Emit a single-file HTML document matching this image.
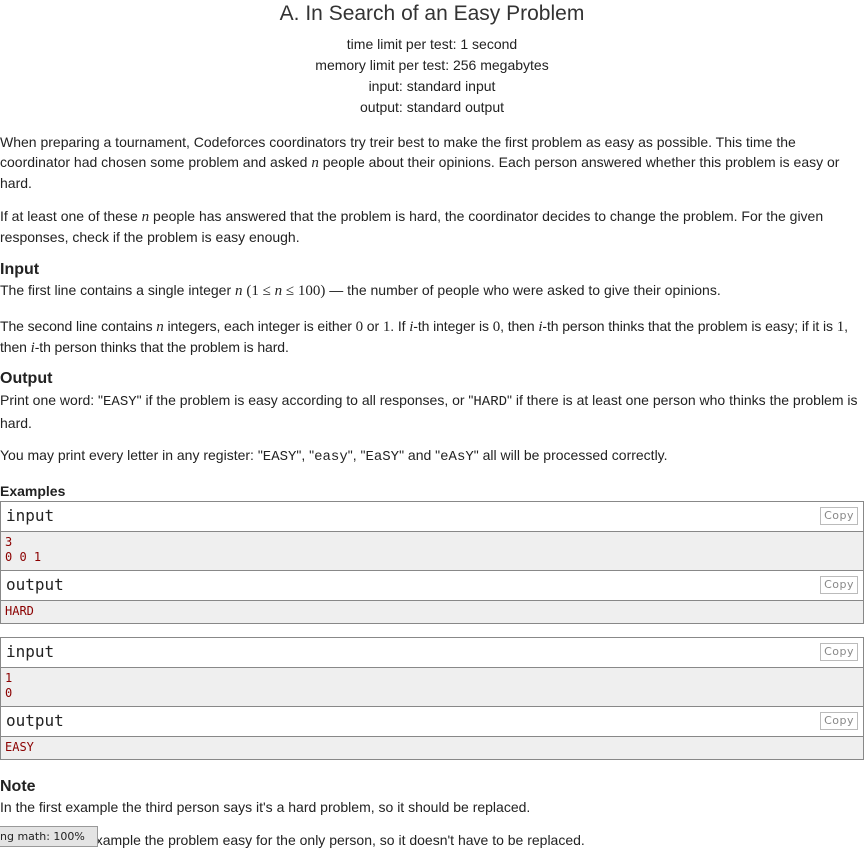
<!DOCTYPE html>
<html><head><meta charset="utf-8"><style>
body{margin:0;width:864px;height:848px;overflow:hidden;background:#fff;font-family:"Liberation Sans",sans-serif;font-size:14px;color:#222;position:relative}
.a{position:absolute;left:0;white-space:nowrap}
.c{position:absolute;left:0;width:864px;text-align:center}
.m{font-family:"Liberation Serif",serif;font-style:italic;font-size:15px}
.r{font-family:"Liberation Serif",serif;font-size:15px}
.tt{font-family:"Liberation Mono",monospace;font-size:14px}
h3{position:absolute;left:0;margin:0;font-size:16px;font-weight:bold}
.box{position:absolute;left:0;width:862px;border:1px solid #888}
.ttl{height:29px;border-bottom:1px solid #888;background:#fff;position:relative;font-family:"DejaVu Sans Mono","Liberation Mono",monospace;font-size:16px;line-height:28px;padding-left:5px}
.cp{position:absolute;right:5px;top:5px;border:1px solid #bbb;font-size:11px;color:#888;font-family:"DejaVu Sans",sans-serif;line-height:16px;padding:0 3px;letter-spacing:.5px}
.dat{background:#efefef;border-bottom:1px solid #888;font-family:"DejaVu Sans Mono","Liberation Mono",monospace;font-size:12px;color:#8b0000;padding:3px 4px;line-height:15px}
.dat:last-child{border-bottom:none}
</style></head><body>
<div class="c" style="top:2px;font-size:21px;color:#333">A. In Search of an Easy Problem</div>
<div class="c" style="top:36px">time limit per test: 1 second</div>
<div class="c" style="top:57px">memory limit per test: 256 megabytes</div>
<div class="c" style="top:78px">input: standard input</div>
<div class="c" style="top:99px">output: standard output</div>
<div class="a" style="top:132px;line-height:20px;white-space:normal;width:862px">When preparing a tournament, Codeforces coordinators try treir best to make the first problem as easy as possible. This time the coordinator had chosen some problem and asked <span class="m">n</span> people about their opinions. Each person answered whether this problem is easy or hard.</div>
<div class="a" style="top:206px;line-height:20px;white-space:normal;width:862px">If at least one of these <span class="m">n</span> people has answered that the problem is hard, the coordinator decides to change the problem. For the given responses, check if the problem is easy enough.</div>
<h3 style="top:261px">Input</h3>
<div class="a" style="top:282px">The first line contains a single integer <span class="m">n</span> <span class="r">(1 ≤ <i>n</i> ≤ 100)</span> — the number of people who were asked to give their opinions.</div>
<div class="a" style="top:316px;line-height:20px;white-space:normal;width:870px;letter-spacing:-0.1px">The second line contains <span class="m">n</span> integers, each integer is either <span class="r">0</span> or <span class="r">1</span>. If <span class="m">i</span>-th integer is <span class="r">0</span>, then <span class="m">i</span>-th person thinks that the problem is easy; if it is <span class="r">1</span>, then <span class="m">i</span>-th person thinks that the problem is hard.</div>
<h3 style="top:370px">Output</h3>
<div class="a" style="top:390px;line-height:21px;white-space:normal;width:862px">Print one word: "<span class="tt">EASY</span>" if the problem is easy according to all responses, or "<span class="tt">HARD</span>" if there is at least one person who thinks the problem is hard.</div>
<div class="a" style="top:447px">You may print every letter in any register: "<span class="tt">EASY</span>", "<span class="tt">easy</span>", "<span class="tt">EaSY</span>" and "<span class="tt">eAsY</span>" all will be processed correctly.</div>
<div class="a" style="top:483px;font-weight:bold">Examples</div>
<div class="box" style="top:501px">
<div class="ttl">input<span class="cp">Copy</span></div>
<div class="dat" style="height:32px">3<br>0 0 1</div>
<div class="ttl">output<span class="cp">Copy</span></div>
<div class="dat" style="height:16px">HARD</div>
</div>
<div class="box" style="top:637px">
<div class="ttl">input<span class="cp">Copy</span></div>
<div class="dat" style="height:32px">1<br>0</div>
<div class="ttl">output<span class="cp">Copy</span></div>
<div class="dat" style="height:16px">EASY</div>
</div>
<h3 style="top:778px">Note</h3>
<div class="a" style="top:799px">In the first example the third person says it's a hard problem, so it should be replaced.</div>
<div class="a" style="top:832px">In the second example the problem easy for the only person, so it doesn't have to be replaced.</div>
<div class="a" style="top:826px;height:19px;width:97px;background:#e4e4e4;border:1px solid #999;border-left:none;font-size:11px;font-family:'DejaVu Sans',sans-serif;line-height:19px;overflow:hidden">ng math: 100%</div>
</body></html>
